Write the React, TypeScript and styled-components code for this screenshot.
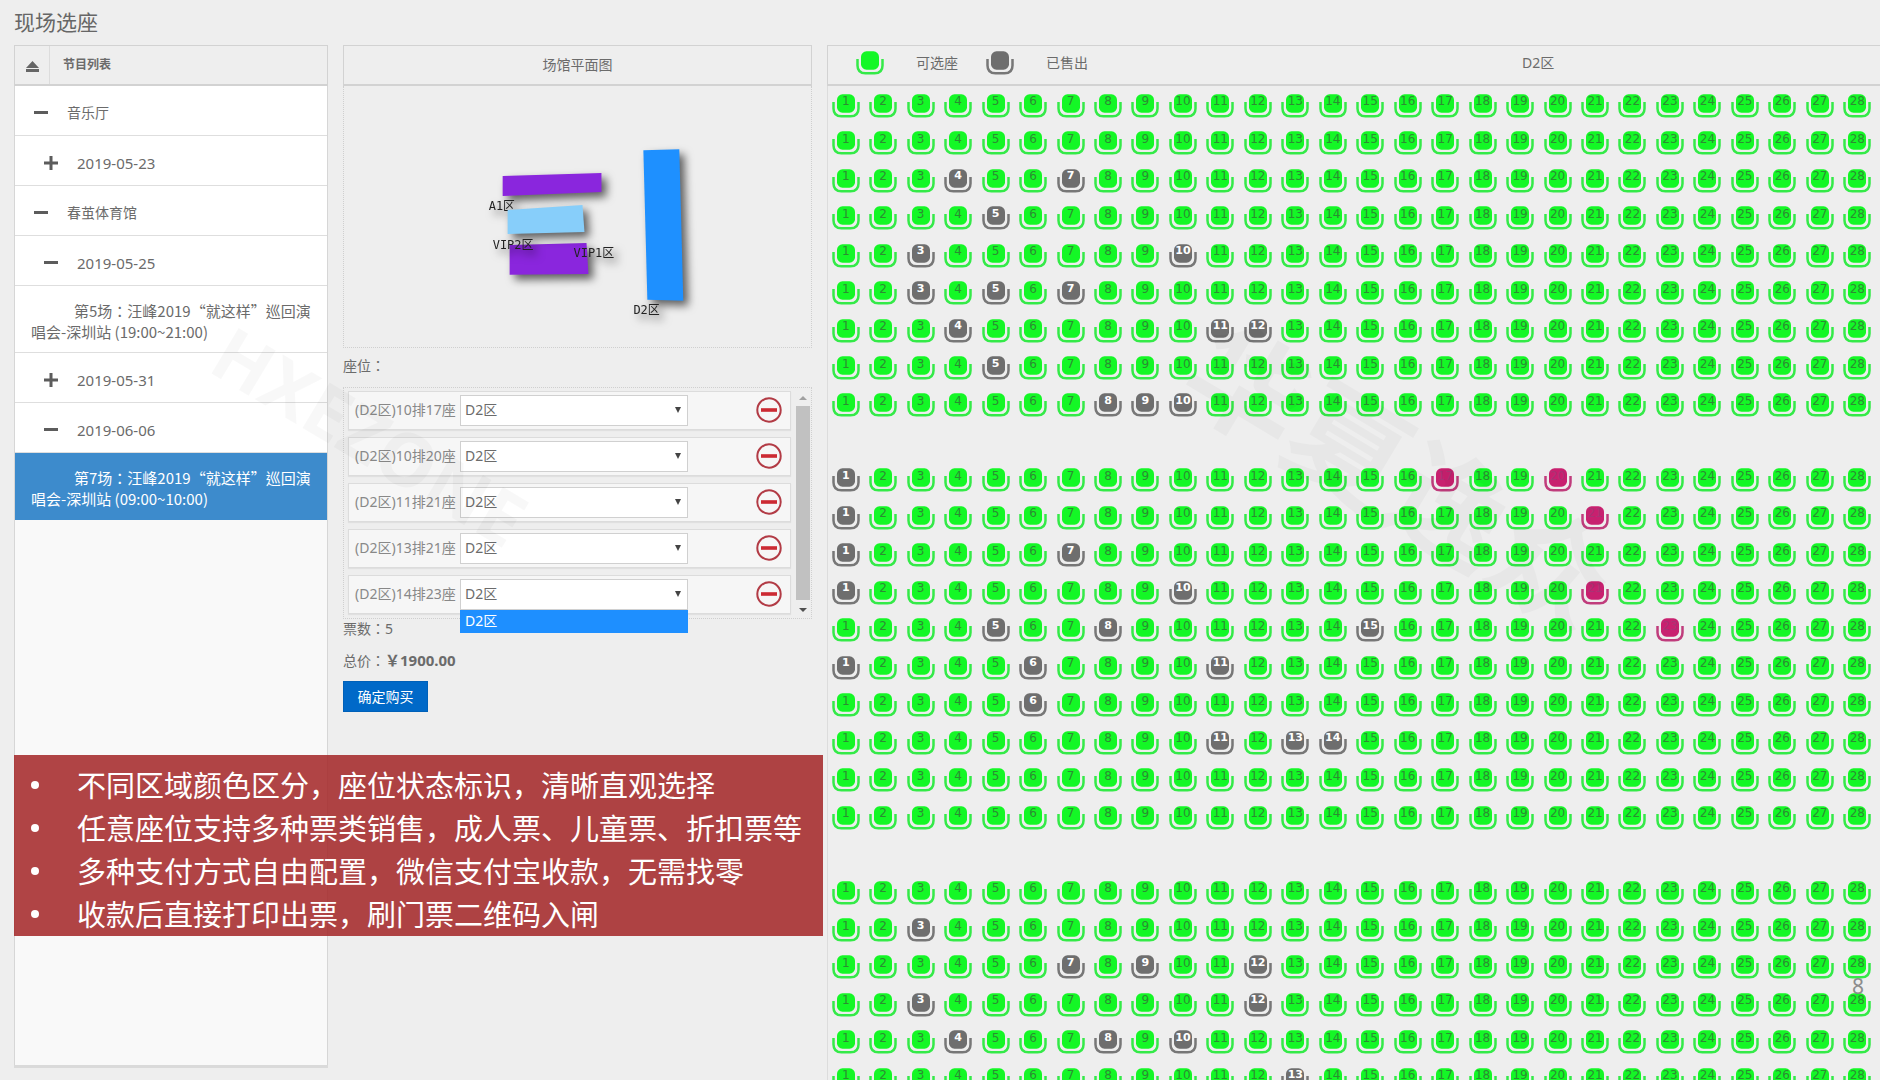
import React, { useState } from "react";
import styled, { createGlobalStyle } from "styled-components";

const GlobalStyle = createGlobalStyle`
  *, *::before, *::after { box-sizing: border-box; }
  body {
    margin: 0;
    background: #eeeeee;
    color: #6b6b6b;
    font-family: "Noto Sans", "Noto Sans CJK SC", sans-serif;
    font-size: 14px;
    line-height: 20px;
  }
  button, select { font: inherit; color: inherit; }
  ul { list-style: none; margin: 0; padding: 0; }
`;

/* ---------- page frame ---------- */

const Page = styled.div`
  position: relative;
  display: flex;
  flex-direction: column;
  height: 100vh;
  padding-left: 14px;
  overflow: hidden;
`;

const PageTitle = styled.h1`
  margin: 0;
  padding-top: 7px;
  height: 45px;
  font-size: 21px;
  line-height: 30px;
  font-weight: 400;
  color: #666;
`;

const Columns = styled.main`
  flex: 1;
  min-height: 0;
  display: grid;
  grid-template-columns: 314px 469px minmax(0, 1fr);
  grid-template-rows: minmax(0, 1fr);
  column-gap: 15px;
`;

const HeaderBar = styled.header`
  display: flex;
  align-items: center;
  height: 41px;
  border: 1px solid #d2d2d2;
  border-bottom: 2px solid #d2d2d2;
`;

const CenteredTitle = styled.h2`
  flex: 1;
  margin: 0;
  text-align: center;
  font-size: 14px;
  font-weight: 400;
`;

/* ---------- programme list ---------- */

const ProgrammePanel = styled.section`
  display: flex;
  flex-direction: column;
  margin-bottom: 12px;
  background: #f9f9f9;
  border-bottom: 3px solid #dadada;
`;

const ProgrammeHeader = styled(HeaderBar)`
  background: #eee;
`;

const CollapseAll = styled.button`
  display: flex;
  align-items: center;
  justify-content: center;
  align-self: stretch;
  width: 35px;
  padding: 3px 0 0;
  border: 0;
  border-right: 1px solid #dcdcdc;
  background: none;
`;

const ProgrammeTitle = styled.h2`
  margin: 0;
  padding-left: 13px;
  font-size: 12px;
  font-weight: 600;
`;

const Tree = styled.ul`
  flex: 1;
  border: solid #d6d6d6;
  border-width: 0 1px;
`;

const TreeToggle = styled.button<{ $level: number }>`
  display: flex;
  align-items: center;
  gap: 19px;
  width: 100%;
  height: 50px;
  padding: 5px 0 0 ${(p) => 9 + p.$level * 10}px;
  border: 0;
  border-bottom: 1px solid #dedede;
  background: #fff;
  text-align: left;
  font-size: ${(p) => (p.$level > 1 ? 15 : 14)}px;
`;

const Show = styled.button<{ $active: boolean }>`
  display: block;
  width: 100%;
  padding: 14px 8px 10px 16px;
  border: 0;
  border-bottom: 1px solid ${(p) => (p.$active ? "#3d8bcc" : "#dedede")};
  background: ${(p) => (p.$active ? "#3d8bcc" : "#fff")};
  color: ${(p) => (p.$active ? "#fff" : "#6b6b6b")};
  font-family: "Noto Sans CJK TC", "Noto Sans CJK SC", sans-serif;
  font-size: 15px;
  line-height: 21px;
  text-align: left;
  text-indent: 43px;
`;

/* ---------- venue + order ---------- */

const OrderPanel = styled.section`
  display: flex;
  flex-direction: column;
  align-items: stretch;
`;

const VenueMap = styled.div`
  height: 262px;
  border: 1px dotted #cfcfcf;
  border-top: 0;
  display: flex;
  justify-content: center;

  svg { display: block; }
  text { font: 12px "DejaVu Sans Mono", "Noto Sans CJK SC", monospace; fill: #222; }
`;

const Zone = styled.g`
  filter: drop-shadow(5px 5px 4px rgba(0, 0, 0, 0.6));
`;

const FieldLine = styled.p`
  margin: 0;
  height: 20px;
  font-family: "Noto Sans", "Noto Sans CJK TC", sans-serif;
`;

const SeatsLabel = styled(FieldLine)`
  margin: 8px 0 11px;
`;

const OrderScroller = styled.div`
  display: flex;
  justify-content: space-between;
  padding: 3px 1px 4px 4px;
  border: 1px dotted #cfcfcf;
`;

const OrderList = styled.ul`
  flex: 1;
  display: flex;
  flex-direction: column;
  gap: 7px;
`;

const OrderRow = styled.li`
  display: flex;
  align-items: center;
  height: 39px;
  padding: 0 8px 1px 6px;
  border: 1px solid #dcdcdc;
  background: #f6f6f6;
  box-shadow: 0 1px 1px #e0e0e0;
`;

const OrderLabel = styled.label`
  width: 105px;
  white-space: nowrap;
  color: #888;
`;

const SelectBox = styled.div`
  position: relative;
  width: 228px;
  height: 31px;

  &::after {
    content: "";
    position: absolute;
    right: 7px;
    top: 12px;
    border: solid transparent;
    border-width: 6px 3px 0;
    border-top-color: #444;
    pointer-events: none;
  }
`;

const ZoneSelect = styled.select`
  appearance: none;
  width: 100%;
  height: 100%;
  padding: 0 4px;
  border: 1px solid #d0d0d0;
  border-radius: 0;
  background: #fff;
`;

const OptionMenu = styled.ul`
  position: absolute;
  left: 0;
  right: 0;
  top: 100%;
  z-index: 2;
`;

const OptionItem = styled.li`
  height: 23px;
  padding: 0 5px;
  line-height: 22px;
  background: #1e8fff;
  color: #fff;
`;

const RemoveButton = styled.button`
  display: flex;
  margin-left: auto;
  padding: 0;
  border: 0;
  background: none;
`;

const ScrollTrack = styled.div`
  display: flex;
  flex-direction: column;
  align-items: center;
  justify-content: space-between;
  width: 14px;
  margin-left: 5px;
  padding: 5px 0 2px;
`;

const ScrollThumb = styled.div`
  flex: 1;
  width: 100%;
  margin: 6px 0 8px;
  background: #c1c1c1;
`;

const ScrollArrow = styled.span<{ $up?: boolean }>`
  border: solid transparent;
  border-width: ${(p) => (p.$up ? "0 4px 4px" : "4px 4px 0")};
  border-bottom-color: ${(p) => (p.$up ? "#a0a0a0" : "transparent")};
  border-top-color: ${(p) => (p.$up ? "transparent" : "#505050")};
`;

const Summary = styled.div`
  display: flex;
  flex-direction: column;
  align-items: flex-start;
  gap: 11px;

  strong { font-size: 15px; }
`;

const BuyButton = styled.button`
  width: 85px;
  height: 31px;
  padding: 0;
  border: 1px solid #0060b8;
  background: #0069c8;
  color: #fff;
`;

/* ---------- seat chart ---------- */

const SeatPanel = styled.section`
  min-width: 0;
`;

const SeatHeader = styled(HeaderBar)`
  border-right: 0;
  padding-bottom: 5px;
`;

const Legend = styled.ul`
  flex: 0 0 35%;
  display: flex;
  padding-left: 28px;
`;

const LegendItem = styled.li`
  display: flex;
  align-items: center;
  gap: 32px;
  width: 130px;
  white-space: nowrap;
`;

const SeatRows = styled.div`
  display: flex;
  flex-direction: column;
  padding: 1px 4px 0 0;
  box-shadow: inset 1px 0 #dcdcdc;
`;

const SeatRow = styled.div`
  display: grid;
  grid-template-columns: repeat(28, minmax(0, 1fr));
`;

const Aisle = styled.div`
  width: calc(100% / 28);
  aspect-ratio: 1;
`;

type SeatState = "free" | "sold" | "picked";

const seatColor: Record<SeatState, string> = {
  free: "#14f726",
  sold: "#6e6e6e",
  picked: "#c8206f",
};
const rimColor: Record<SeatState, string> = {
  free: "#34ea48",
  sold: "#777777",
  picked: "#c03c7c",
};
const numberColor: Record<SeatState, string> = {
  free: "#2c8c32",
  sold: "#ffffff",
  picked: "#a83474",
};

const SeatButton = styled.button<{ $state: SeatState }>`
  display: grid;
  place-items: center;
  width: 100%;
  aspect-ratio: 1;
  padding: 0;
  border: 0;
  background: none;
  color: ${(p) => numberColor[p.$state]};
  font-family: "DejaVu Sans", sans-serif;
  font-size: ${(p) => (p.$state === "sold" ? 11 : 12)}px;
  font-weight: ${(p) => (p.$state === "sold" ? 700 : 400)};
  line-height: 14px;

  > * { grid-area: 1 / 1; }
`;

const SeatNumber = styled.span`
  padding-bottom: 9px;
`;

/* ---------- overlays ---------- */

const Watermark = styled.div<{ $x: string; $y: string; $size: number }>`
  position: absolute;
  left: ${(p) => p.$x};
  top: ${(p) => p.$y};
  font-size: ${(p) => p.$size}px;
  line-height: 1;
  font-weight: 700;
  color: rgba(0, 0, 0, 0.028);
  white-space: nowrap;
  transform: translate(-50%, -50%) rotate(31deg);
  pointer-events: none;
`;

const Caption = styled.aside`
  position: absolute;
  left: 14px;
  top: 755px;
  width: 809px;
  height: 181px;
  padding: 8px 0 0 15px;
  background: rgba(165, 42, 43, 0.88);
  color: #fff;
  font-family: "Noto Sans CJK SC", sans-serif;
  font-size: 29px;
  line-height: 43px;
  z-index: 3;
`;

const CaptionItem = styled.li`
  display: flex;
  align-items: center;
  gap: 38px;
  white-space: nowrap;

  &::before {
    content: "";
    width: 8px;
    height: 8px;
    margin-left: 2px;
    border-radius: 50%;
    background: #fff;
  }
`;

const PageNumber = styled.span`
  position: absolute;
  right: 16px;
  bottom: 84px;
  font-size: 21px;
  color: #8c8c8c;
`;

/* ---------- icons ---------- */

const PlusMinus = ({ open }: { open: boolean }) => (
  <svg width="14" height="14" viewBox="0 0 14 14" aria-hidden="true">
    <path d={open ? "M0 6.500h14" : "M0 7h14M7 0v14"} stroke="#5c5c5c" strokeWidth="3" />
  </svg>
);

const EjectIcon = () => (
  <svg width="13" height="11" viewBox="0 0 13 11" aria-hidden="true">
    <path d="M6.500 0L13 7H0zM0 8h13v3H0z" fill="#666" />
  </svg>
);

const RemoveIcon = () => (
  <svg width="26" height="26" viewBox="0 0 26 26" aria-hidden="true">
    <circle cx="13" cy="13" r="11.700" fill="none" stroke="#b23b45" strokeWidth="2" />
    <path d="M5 13h16" stroke="#cc2a33" strokeWidth="3.600" />
  </svg>
);

const SeatIcon = ({ state }: { state: SeatState }) => (
  <svg width="28" height="24" viewBox="0 0 28 24" aria-hidden="true">
    <rect x="5" y="0.300" width="18" height="18.400" rx="5.500" fill={seatColor[state]} />
    <path
      d="M1.500 8V14.500Q1.500 22.300 9.500 22.300H18.500Q26.500 22.300 26.500 14.500V8"
      fill="none"
      stroke={rimColor[state]}
      strokeWidth="2.500"
    />
  </svg>
);

/* ---------- data ---------- */

type RowData = { sold?: number[]; picked?: number[] } | null;

const rows: RowData[] = [
  {}, {},
  { sold: [4, 7] },
  { sold: [5] },
  { sold: [3, 10] },
  { sold: [3, 5, 7] },
  { sold: [4, 11, 12] },
  { sold: [5] },
  { sold: [8, 9, 10] },
  null,
  { sold: [1], picked: [17, 20] },
  { sold: [1], picked: [21] },
  { sold: [1, 7] },
  { sold: [1, 10], picked: [21] },
  { sold: [5, 8, 15], picked: [23] },
  { sold: [1, 6, 11] },
  { sold: [6] },
  { sold: [11, 13, 14] },
  {}, {},
  null,
  {},
  { sold: [3] },
  { sold: [7, 9, 12] },
  { sold: [3, 12] },
  { sold: [4, 8, 10] },
  { sold: [13] },
];

const seatNumbers = Array.from({ length: 28 }, (_, i) => i + 1);

const orders = ["(D2区)10排17座", "(D2区)10排20座", "(D2区)11排21座", "(D2区)13排21座", "(D2区)14排23座"];

const zones = [
  { name: "A1区", points: "159,90 258,87 258,106 159,110", fill: "#8a26dd", x: 145, y: 124 },
  { name: "VIP1区", points: "166,159 243,157 245,188 166,189", fill: "#8a26dd", x: 230, y: 171 },
  { name: "VIP2区", points: "164,124 239,119 241,146 164,148", fill: "#87cefa", x: 149, y: 163 },
  { name: "D2区", points: "300,64 336,63 340,215 304,214", fill: "#1e90ff", x: 290, y: 228 },
];

const captions = [
  "不同区域颜色区分，座位状态标识，清晰直观选择",
  "任意座位支持多种票类销售，成人票、儿童票、折扣票等",
  "多种支付方式自由配置，微信支付宝收款，无需找零",
  "收款后直接打印出票，刷门票二维码入闸",
];

type TreeNode =
  | { kind: "group"; level: number; open: boolean; text: string }
  | { kind: "show"; no: number; time: string };

const tree: TreeNode[] = [
  { kind: "group", level: 1, open: true, text: "音乐厅" },
  { kind: "group", level: 2, open: false, text: "2019-05-23" },
  { kind: "group", level: 1, open: true, text: "春茧体育馆" },
  { kind: "group", level: 2, open: true, text: "2019-05-25" },
  { kind: "show", no: 5, time: "(19:00~21:00)" },
  { kind: "group", level: 2, open: false, text: "2019-05-31" },
  { kind: "group", level: 2, open: true, text: "2019-06-06" },
  { kind: "show", no: 7, time: "(09:00~10:00)" },
];

const stateOf = (row: NonNullable<RowData>, n: number): SeatState =>
  row.sold?.includes(n) ? "sold" : row.picked?.includes(n) ? "picked" : "free";

export default function App() {
  const [activeShow, setActiveShow] = useState(7);

  return (
    <>
      <GlobalStyle />
      <Page>
        <PageTitle>现场选座</PageTitle>
        <Columns>
          <ProgrammePanel>
            <ProgrammeHeader>
              <CollapseAll aria-label="收起">
                <EjectIcon />
              </CollapseAll>
              <ProgrammeTitle>节目列表</ProgrammeTitle>
            </ProgrammeHeader>
            <Tree>
              {tree.map((node, i) => (
                <li key={i}>
                  {node.kind === "group" ? (
                    <TreeToggle $level={node.level} aria-expanded={node.open}>
                      <PlusMinus open={node.open} />
                      {node.text}
                    </TreeToggle>
                  ) : (
                    <Show $active={node.no === activeShow} onClick={() => setActiveShow(node.no)}>
                      {`第${node.no}场：汪峰2019“就这样”巡回演唱会-深圳站 ${node.time}`}
                    </Show>
                  )}
                </li>
              ))}
            </Tree>
          </ProgrammePanel>

          <OrderPanel>
            <HeaderBar>
              <CenteredTitle>场馆平面图</CenteredTitle>
            </HeaderBar>
            <VenueMap>
              <svg width="468" height="261" viewBox="0 0 468 261" role="img" aria-label="场馆平面图">
                {zones.map((z) => (
                  <Zone key={z.name}>
                    <polygon points={z.points} fill={z.fill} />
                    <text x={z.x} y={z.y}>{z.name}</text>
                  </Zone>
                ))}
              </svg>
            </VenueMap>
            <SeatsLabel>座位：</SeatsLabel>
            <OrderScroller>
              <OrderList>
                {orders.map((name, i) => (
                  <OrderRow key={name}>
                    <OrderLabel htmlFor={`zone-${i}`}>{name}</OrderLabel>
                    <SelectBox>
                      <ZoneSelect id={`zone-${i}`}>
                        <option>D2区</option>
                      </ZoneSelect>
                      {i === orders.length - 1 && (
                        <OptionMenu>
                          <OptionItem>D2区</OptionItem>
                        </OptionMenu>
                      )}
                    </SelectBox>
                    <RemoveButton aria-label="移除">
                      <RemoveIcon />
                    </RemoveButton>
                  </OrderRow>
                ))}
              </OrderList>
              <ScrollTrack>
                <ScrollArrow $up />
                <ScrollThumb />
                <ScrollArrow />
              </ScrollTrack>
            </OrderScroller>
            <Summary>
              <FieldLine>票数：5</FieldLine>
              <FieldLine>
                总价：<strong>￥1900.00</strong>
              </FieldLine>
              <BuyButton>确定购买</BuyButton>
            </Summary>
          </OrderPanel>

          <SeatPanel>
            <SeatHeader>
              <Legend>
                <LegendItem>
                  <SeatIcon state="free" />
                  可选座
                </LegendItem>
                <LegendItem>
                  <SeatIcon state="sold" />
                  已售出
                </LegendItem>
              </Legend>
              <CenteredTitle>D2区</CenteredTitle>
            </SeatHeader>
            <SeatRows>
              {rows.map((row, r) =>
                row === null ? (
                  <Aisle key={r} />
                ) : (
                  <SeatRow key={r}>
                    {seatNumbers.map((n) => {
                      const state = stateOf(row, n);
                      return (
                        <SeatButton key={n} $state={state} disabled={state === "sold"}>
                          <SeatIcon state={state} />
                          <SeatNumber>{n}</SeatNumber>
                        </SeatButton>
                      );
                    })}
                  </SeatRow>
                ),
              )}
            </SeatRows>
          </SeatPanel>
        </Columns>

        <Watermark $x="370px" $y="436px" $size={74}>HXEZONE</Watermark>
        <Watermark $x="1400px" $y="476px" $size={118}>华夏逸众</Watermark>

        <Caption>
          <ul>
            {captions.map((c) => (
              <CaptionItem key={c}>{c}</CaptionItem>
            ))}
          </ul>
        </Caption>
        <PageNumber>8</PageNumber>
      </Page>
    </>
  );
}
